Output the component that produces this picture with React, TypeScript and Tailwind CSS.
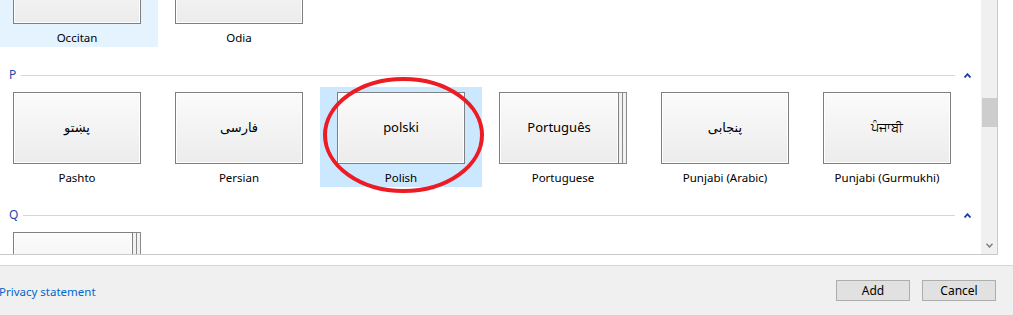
import React from "react";

type Lang = { native: string; name: string; stack?: boolean; state?: "hover" | "selected" };

const TOP: Lang[] = [
  { native: "", name: "Occitan", state: "hover" },
  { native: "", name: "Odia" },
];

const P_ROW: Lang[] = [
  { native: "پښتو", name: "Pashto" },
  { native: "فارسی", name: "Persian" },
  { native: "polski", name: "Polish", state: "selected" },
  { native: "Português", name: "Portuguese", stack: true },
  { native: "پنجابی", name: "Punjabi (Arabic)" },
  { native: "ਪੰਜਾਬੀ", name: "Punjabi (Gurmukhi)" },
];

const Q_ROW: Lang[] = [{ native: "", name: "", stack: true }];

function Tile({ lang }: { lang: Lang }) {
  const bg =
    lang.state === "selected" ? "bg-[#cce8ff]" : lang.state === "hover" ? "bg-[#e5f3ff]" : "bg-transparent";
  return (
    <div className={`w-[162px] h-[100px] shrink-0 px-[17px] pt-[5px] flex flex-col items-center ${bg}`}>
      <div className="flex w-[128px] h-[72px]">
        <div
          className={`${lang.stack ? "w-[120px]" : "w-[128px]"} h-full border border-[#7f7f7f] bg-gradient-to-b from-[#fbfbfb] to-[#ececec] shadow-[inset_0_0_0_1px_#ffffff] flex items-center justify-center text-[13px] text-black`}
        >
          {lang.native}
        </div>
        {lang.stack && (
          <>
            <div className="w-[4px] h-full border-y border-r border-[#8a8a8a] bg-[#f2f2f2]" />
            <div className="w-[4px] h-full border-y border-r border-[#8a8a8a] bg-[#f2f2f2]" />
          </>
        )}
      </div>
      <div className="mt-[6px] h-[16px] leading-[16px] text-[11.5px] text-black">{lang.name}</div>
    </div>
  );
}

function Row({ items }: { items: Lang[] }) {
  return (
    <div className="flex -ml-[4px]">
      {items.map((l, i) => (
        <Tile key={i} lang={l} />
      ))}
    </div>
  );
}

function Header({ letter }: { letter: string }) {
  return (
    <div className="flex items-center h-[16px] mt-[20px] mb-[4px] pl-[9px] pr-[10px]">
      <span className="text-[12px] leading-[16px] text-[#1c48b0]">{letter}</span>
      <div className="flex-1 h-px bg-[#cdd7e6] ml-[5px] mr-[9px]" />
      <svg width="7" height="5" viewBox="0 0 7 5">
        <path d="M0.5 4.5 L3.5 1.2 L6.5 4.5" fill="none" stroke="#173d9e" strokeWidth="1.8" />
      </svg>
    </div>
  );
}

export default function App() {
  return (
    <div
      className="relative w-[1013px] h-[315px] bg-white overflow-hidden"
      style={{ fontFamily: '"Noto Sans", "DejaVu Sans", sans-serif' }}
    >
      <div className="flex w-[998px] h-[255px] border-r border-b border-[#c9c9c9]">
        <div className="w-[981px] h-[254px] overflow-hidden">
          <div className="-mt-[53px]">
            <Row items={TOP} />
            <Header letter="P" />
            <Row items={P_ROW} />
            <Header letter="Q" />
            <Row items={Q_ROW} />
          </div>
        </div>
        <div className="w-[16px] h-[254px] bg-[#f0f0f0] flex flex-col items-center">
          <div className="w-[15px] h-[29px] mt-[98px] bg-[#cdcdcd]" />
          <svg className="mt-auto mb-[6px]" width="7" height="5" viewBox="0 0 7 5">
            <path d="M0.5 0.8 L3.5 4 L6.5 0.8" fill="none" stroke="#7a7a7a" strokeWidth="1.4" />
          </svg>
        </div>
      </div>

      <div className="mt-[10px] h-[50px] border-t border-[#d6d6d6] bg-[#f0f0f0] flex items-center pr-[17px]">
        <span className="-ml-[1px] mt-[2px] text-[11.5px] text-[#0066cc]">Privacy statement</span>
        <div className="ml-auto flex gap-[12px]">
          <button className="w-[74px] h-[21px] bg-[#e1e1e1] border border-[#adadad] text-[12px] text-black leading-none">
            Add
          </button>
          <button className="w-[74px] h-[21px] bg-[#e1e1e1] border border-[#adadad] text-[12px] text-black leading-none">
            Cancel
          </button>
        </div>
      </div>

      <svg className="absolute left-[321px] top-[75px] pointer-events-none" width="166" height="122" viewBox="0 0 166 122">
        <ellipse cx="82.5" cy="60" rx="78.5" ry="56" fill="none" stroke="#ed1c24" strokeWidth="4" />
      </svg>
    </div>
  );
}
